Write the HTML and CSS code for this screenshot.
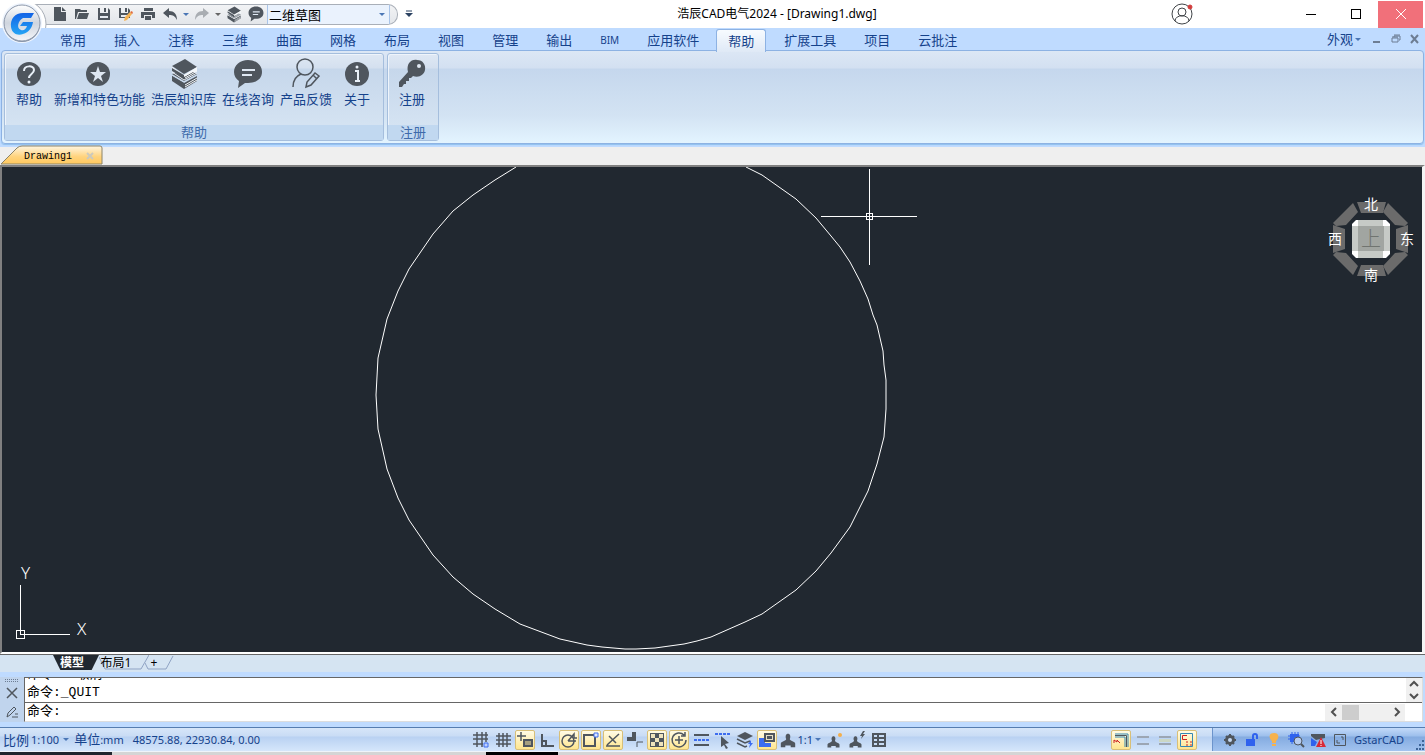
FILE: index.html
```html
<!DOCTYPE html>
<html lang="zh-CN">
<head>
    <meta charset="utf-8">
    <title>浩辰CAD电气2024 - [Drawing1.dwg]</title>
    <link rel="stylesheet" href="styles.css">
</head>
<body>
<svg class="defs" aria-hidden="true">
    <symbol id="i-layers" viewBox="0 0 28 32">
        <path d="M15 1l12 8-13 7L2 8z" fill="#4f565e"/>
        <path d="M2 9v4l12 7 13-7V9l-13 8z" fill="#f4f7fa"/>
        <path d="M2 10l12 7v3L2 13zM2 18l12 7v3L2 21zM2 25z" fill="#4f565e"/>
        <path d="M2 16l12 7 13-7-4-2-9 5-8-4zM2 18v5l12 8 13-8v-5l-13 7z" fill="#4f565e"/>
        <path d="M15 18l12-7M15 20l12-7M15 27l12-7M15 29l12-7" stroke="#f4f7fa" stroke-width="1"/>
        <path d="M2 14l12 8 13-7" stroke="#eaf0f7" fill="none"/>
    </symbol>
    <symbol id="i-comment" viewBox="0 0 30 30">
        <path d="M15 1c8 0 14 5 14 12s-6 11-14 11l-3 0-7 5 1-7c-3-2-5-5-5-9C1 6 7 1 15 1z" fill="#4f565e"/>
        <path d="M9 11h13M9 16h10" stroke="#dfe8f3" stroke-width="2"/>
    </symbol>
    <symbol id="i-person" viewBox="0 0 20 20">
        <path d="M8 9C5 1 15 1 12 9c0 2 6 3 6 5v4h-5v-2H7v2H2v-4c0-2 6-3 6-5z" fill="#4f565e"/>
    </symbol>
</svg>

<header class="titlebar">
    <div class="quick">
        <button aria-label="新建"><svg width="16" height="16"><path d="M2 1h7v5h5v9H2z" fill="#4f565e"/><path d="M10 1l4 4h-4z" fill="#4f565e"/></svg></button>
        <button aria-label="打开"><svg width="16" height="16"><path d="M1 13V3h5l1 1h6v2H4L2 13z" fill="#4f565e"/><path d="M5 7h10l-2 6H3z" fill="#4f565e"/></svg></button>
        <button aria-label="保存"><svg width="16" height="16"><path d="M2 2h2v5h8V2l2 2v10H2z" fill="#4f565e"/><path d="M8 2h2v4H8z" fill="#4f565e"/><path d="M4 10h8v2H4z" fill="#e6eaf0"/></svg></button>
        <button aria-label="另存为"><svg width="16" height="16"><path d="M1 2h2v5h7V2l2 2v8H1z" fill="#4f565e"/><path d="M7 2h2v4H7zM4 10h5v2H4z" fill="#4f565e"/><path d="M3 9h6v2H3z" fill="#e6eaf0"/><path d="M6 15l1-4 5-5 2 2-5 6z" fill="#f5b253"/><path d="M12 6l2-1 1 2-1 1z" fill="#e26b3c"/></svg></button>
        <button aria-label="打印"><svg width="16" height="16"><path d="M4 2h9v3H4zM1 6h14v6h-3V9H4v3H1zM5 10h6v4H5z" fill="#4f565e"/></svg></button>
        <button aria-label="放弃"><svg width="16" height="16"><path d="M1 7l6-5v3c5 0 8 3 8 9-2-4-4-5-8-5v3z" fill="#4f565e"/></svg></button>
        <i class="caret blue"></i>
        <button aria-label="重做"><svg width="16" height="16"><path d="M15 7L9 2v3C4 5 1 8 1 14c2-4 4-5 8-5v3z" fill="#a9adb2"/></svg></button>
        <i class="caret"></i>
        <button aria-label="知识库"><svg width="16" height="17"><use href="#i-layers"/></svg></button>
        <button aria-label="咨询"><svg width="16" height="16"><use href="#i-comment"/></svg></button>
        <label class="space"><select aria-label="工作空间"><option>二维草图</option></select><i class="caret blue"></i></label>
    </div>
    <button class="more" aria-label="自定义"><svg width="8" height="8"><path d="M1 1h6" stroke="#2b4262"/><path d="M0 3h8L4 7z" fill="#2b4262"/></svg></button>
    <h1>浩辰CAD电气2024 - [Drawing1.dwg]</h1>
    <button class="user" aria-label="用户">
        <svg width="24" height="24" fill="none" stroke="#3f4347">
            <circle cx="12" cy="12" r="10"/><circle cx="12" cy="10" r="4"/><path d="M5 19c0-7 14-7 14 0"/>
            <circle cx="20" cy="5" r="2" fill="#d23c3c" stroke="#d23c3c"/>
        </svg>
    </button>
    <div class="window">
        <button aria-label="最小化"><svg width="12" height="12"><path d="M1 6h10" transform="translate(0 .5)" stroke="#000"/></svg></button>
        <button aria-label="最大化"><svg width="12" height="12"><rect x="1.500" y="1.500" width="9" height="9" fill="none" stroke="#000"/></svg></button>
        <button class="close" aria-label="关闭"><svg width="12" height="12"><path d="M1 1l10 10M11 1L1 11" stroke="#fff"/></svg></button>
    </div>
</header>
<button class="logo" aria-label="主菜单">
    <svg width="50" height="46">
        <defs>
            <linearGradient id="silver" x2="0" y2="1"><stop stop-color="#fff"/><stop offset=".5" stop-color="#cfd5de"/><stop offset="1" stop-color="#f4f6f9"/></linearGradient>
            <linearGradient id="gblue" x2="0" y2="1"><stop stop-color="#1263e6"/><stop offset="1" stop-color="#25a5f5"/></linearGradient>
            <clipPath id="top"><path d="M24 4h26v24H24z"/></clipPath>
        </defs>
        <circle cx="22" cy="24" r="24" fill="#fff" stroke="#a9afb8" clip-path="url(#top)"/>
        <circle cx="22" cy="23" r="20" fill="#eef4fd"/>
        <circle cx="22" cy="24" r="18" fill="#8593a8"/>
        <circle cx="22" cy="23" r="18" fill="url(#silver)" stroke="#8d98aa"/>
        <path d="M34 13H23C15 13 10 19 11 27c1 7 7 9 12 7 6-2 9-6 10-12H23l-3 4h7c-1 3-3 5-6 4-5-2-3-9 2-12h8z" fill="url(#gblue)"/>
    </svg>
</button>

<nav class="menu">
    <a href="#">常用</a><a href="#">插入</a><a href="#">注释</a><a href="#">三维</a><a href="#">曲面</a><a href="#">网格</a><a href="#">布局</a><a href="#">视图</a><a href="#">管理</a><a href="#">输出</a><a href="#" class="latin">BIM</a><a href="#">应用软件</a><a href="#" class="on">帮助</a><a href="#">扩展工具</a><a href="#">项目</a><a href="#">云批注</a>
    <div class="menu-right">
        <button>外观<i class="caret blue"></i></button>
        <button aria-label="最小化文档"><svg width="10" height="10"><path d="M1 8h7" stroke="#6d7d93" stroke-width="2"/></svg></button>
        <button aria-label="还原文档"><svg width="10" height="10" fill="none" stroke="#6d7d93"><path d="M1 4h6v4H1zM3 3V2h6v4H8M1 3h6M3 1h6"/></svg></button>
        <button aria-label="关闭文档"><svg width="10" height="10"><path d="M1 1l7 8M8 1L1 9" stroke="#6d7d93" stroke-width="2"/></svg></button>
    </div>
</nav>

<section class="ribbon">
    <div class="panel">
        <div class="tools">
            <button><svg width="28" height="32"><circle cx="14" cy="16" r="12" fill="#4f565e"/><path d="M9 13c0-6 10-6 10-1 0 4-5 4-5 8" fill="none" stroke="#e9f0f8" stroke-width="2"/><circle cx="14" cy="24" r="1.500" fill="#e9f0f8"/></svg>帮助</button>
            <button class="wide"><svg width="28" height="32"><circle cx="14" cy="16" r="12" fill="#4f565e"/><path d="M14 8l2 6h6l-5 4 2 6-5-4-5 4 2-6-5-4h6z" fill="#dfe8f3"/></svg>新增和特色功能</button>
            <button><svg width="28" height="32"><use href="#i-layers"/></svg>浩辰知识库</button>
            <button><svg width="30" height="32"><use href="#i-comment" y="1" width="30" height="30"/></svg>在线咨询</button>
            <button><svg width="32" height="32" fill="none" stroke="#4f565e" stroke-width="1.500"><circle cx="15" cy="9" r="8"/><path d="M3 29c0-6 3-11 8-13M16 29l1-5 8-9 4 3-8 9zM23 17l4 4"/></svg>产品反馈</button>
            <button><svg width="28" height="32"><circle cx="14" cy="16" r="12" fill="#4f565e"/><path d="M12 13h3v9m-3 1h5" stroke="#e9f0f8" stroke-width="2" fill="none"/><circle cx="14" cy="9" r="1.500" fill="#e9f0f8"/></svg>关于</button>
        </div>
        <h2>帮助</h2>
    </div>
    <div class="panel">
        <div class="tools">
            <button><svg width="28" height="32"><path d="M10 14C8 6 13 1 19 2c6 0 9 5 8 10-1 5-6 8-12 6l-2 2h-2v3H8v3H6l-2 3H1v-5z" fill="#4f565e"/><circle cx="21" cy="8" r="2" fill="#dfe8f3"/></svg>注册</button>
        </div>
        <h2>注册</h2>
    </div>
</section>

<div class="files">
    <div class="file">
        <svg class="shape" width="104" height="20">
            <defs><linearGradient id="amber" x2="0" y2="1"><stop stop-color="#fff6e2"/><stop offset=".6" stop-color="#ffd37c"/><stop offset="1" stop-color="#ffc95f"/></linearGradient></defs>
            <path d="M1 19L17 3q2-2 5-2h78q2 0 2 2v16z" fill="url(#amber)" stroke="#8c8468"/>
        </svg>
        <span>Drawing1</span>
        <button aria-label="关闭图纸"><svg width="8" height="8"><path d="M1 1l6 6M7 1L1 7" stroke="#cbc9bd" stroke-width="2"/></svg></button>
    </div>
</div>

<main class="stage">
    <svg class="drawing" width="100%" height="100%">
        <g transform="translate(-2 -167)" fill="none" stroke="#fff">
            <path d="M746 167L762 175 796 199 816 218 831 236 840 247 850 262 860 281 868 299 873 315 877 325 883 351 884 365 886 380V409L884 437 877 464 872 479 868 491 850 527 831 553 816 571 796 590 762 614 745 622 711 637 697 641 684 644 655 648 636 649H625L602 647 587 645 560 639 520 624 495 609 473 594 453 577 433 555 409 520 398 498 387 469 378 429 376 395 378 358 387 319 398 291 409 269 433 234 453 211 473 195 495 180 516 167"/>
            <g shape-rendering="crispEdges">
                <path d="M821 216.500h96M869.500 169v96"/>
                <rect x="866.500" y="213.500" width="6" height="6"/>
            </g>
        </g>
    </svg>
    <svg class="compass" width="90" height="94">
        <g fill="#6b6b6b">
            <path d="M31 10h29l-3 11H35zM31 84h29l-3-11H35z"/>
            <path d="M82 33v28l-12-4V37zM7 33v28l12-4V37z"/>
            <path d="M62 11l20 20-3 3-10-1-12-13zM27 11L7 31l3 3 10-1 12-13zM62 83l20-20-3-3-10 1-12 13zM27 83L7 63l3-3 10 1 12 13z"/>
        </g>
        <path d="M30 28h30l4 4v30l-4 4H30l-4-4V32z" fill="#fff"/>
        <path d="M32 28h25v6h7v25h-7v7H32v-7h-6V34h6z" fill="#c6cac6"/>
        <path d="M32 34h26v25H32z" fill="#a1a5a1"/>
        <g fill="#fff" text-anchor="middle">
            <text x="45" y="17">北</text><text x="9" y="52">西</text><text x="81" y="52">东</text><text x="45" y="88">南</text>
            <text class="up" x="45" y="54">上</text>
        </g>
    </svg>
    <svg class="ucs" width="80" height="82" fill="none" stroke="#fff" shape-rendering="crispEdges">
        <path d="M8.500 27v50M8 76.500h50"/><rect x="4.500" y="72.500" width="8" height="8"/>
        <text x="9" y="21">Y</text><text x="65" y="77">X</text>
    </svg>
</main>

<div class="layouts">
    <button class="on">模型</button>
    <button class="second"><svg class="shape" width="50" height="18"><path d="M0 2l6 12h36l8-14" fill="none" stroke="#8fa3c4"/></svg>布局1</button>
    <button class="plus"><svg class="shape" width="30" height="18"><path d="M0 8l3 6h18l7-13" fill="none" stroke="#8fa3c4"/></svg>+</button>
</div>

<section class="command">
    <div class="side">
        <svg width="14" height="5"><path d="M0 1.500h14M0 3.500h14" stroke="#6d7d93" stroke-dasharray="1 1"/></svg>
        <button aria-label="关闭命令行"><svg width="14" height="14"><path d="M2 2l10 10M12 2L2 12" stroke="#4f565e" stroke-width="1.500"/></svg></button>
        <button aria-label="设置"><svg width="14" height="14" fill="none" stroke="#4f565e"><path d="M2 12l1-4 6-6 2 2-6 6zM7 12h6M10 9h3"/></svg></button>
    </div>
    <div class="console">
        <div class="history">
            <div class="lines"><p>命令: *取消*</p><p>命令:_QUIT</p></div>
            <div class="vscroll"><button aria-label="向上"><svg width="10" height="8"><path d="M1 6l4-4 4 4" fill="none" stroke="#505050" stroke-width="2"/></svg></button><button aria-label="向下"><svg width="10" height="8"><path d="M1 2l4 4 4-4" fill="none" stroke="#505050" stroke-width="2"/></svg></button></div>
        </div>
        <div class="prompt">
            <label for="cmd">命令:</label><input id="cmd" type="text">
            <div class="hscroll"><button aria-label="向左"><svg width="8" height="10"><path d="M6 1L2 5l4 4" fill="none" stroke="#505050" stroke-width="2"/></svg></button><i></i><button aria-label="向右"><svg width="8" height="10"><path d="M2 1l4 4-4 4" fill="none" stroke="#505050" stroke-width="2"/></svg></button></div>
        </div>
    </div>
</section>

<footer class="status">
    <div class="info">
        <button>比例 <small>1:100</small><i class="caret blue"></i></button>
        <span>单位<small>:mm</small></span>
        <small class="coords">48575.88, 22930.84, 0.00</small>
    </div>
    <div class="modes">
        <button aria-label="捕捉"><svg width="18" height="18"><path d="M5 1v15M10 1v15M14 1v10M1 4h15M1 8h15M1 13h10" stroke="#4f565e" stroke-width="1.500"/><path d="M12 12h4v4h-4z" fill="#bcd0ff" stroke="#3d6df0"/></svg></button>
        <button aria-label="栅格"><svg width="18" height="18"><path d="M5 2v14M9 2v14M13 2v14M2 5h15M2 9h15M2 13h15" stroke="#4f565e" stroke-width="1.500"/></svg></button>
        <button class="on" aria-label="动态输入"><svg width="18" height="18"><path d="M5 1v9M1 5h9" stroke="#4f565e" stroke-width="1.500"/><path d="M7 8h10v8H7z" fill="#4f565e"/><path d="M9 11h6M9 13h6" stroke="#ffe9a0"/></svg></button>
        <button aria-label="正交"><svg width="18" height="18"><path d="M4 3v12h12M4 10h4v5" fill="none" stroke="#4f565e" stroke-width="2"/></svg></button>
        <button class="on" aria-label="极轴"><svg width="18" height="18" fill="none" stroke="#4f565e" stroke-width="1.500"><circle cx="8" cy="10" r="6"/><path d="M8 10h8M8 10l6-7v4h3"/></svg></button>
        <button class="on" aria-label="对象捕捉"><svg width="18" height="18" fill="none"><path d="M2 4h11v11H2z" stroke="#4f565e" stroke-width="2"/><path d="M12 2h4v4h-4z" fill="#dbe6ff" stroke="#3d6df0"/></svg></button>
        <button class="on" aria-label="对象追踪"><svg width="18" height="18" fill="none" stroke="#4f565e" stroke-width="1.500"><path d="M2 15h14M3 14L15 3M5 5l7 7"/></svg></button>
        <button aria-label="线框"><svg width="18" height="18"><path d="M6 1h4v9H1V6h5z" fill="#4f565e"/><path d="M11 16v-5h6" fill="none" stroke="#4f565e"/></svg></button>
        <button class="on" aria-label="透明度"><svg width="18" height="18"><path d="M2 2h14v14H2z" fill="#4f565e"/><path d="M3 3h4v4H3zM11 3h4v4h-4zM7 7h4v4H7zM3 11h4v4H3zM11 11h4v4h-4z" fill="#eee3bd"/></svg></button>
        <button class="on" aria-label="循环选择"><svg width="18" height="18" fill="none" stroke="#4f565e" stroke-width="1.500"><path d="M14 4a7 7 0 1 0 2 5M15 1v4h-4M5 9h8M9 5v8"/></svg></button>
        <button aria-label="线宽"><svg width="18" height="18"><path d="M2 4h15M2 14h15" stroke="#4f565e" stroke-width="2"/><path d="M2 9h15" stroke="#3d6df0" stroke-width="2" stroke-dasharray="3 1"/></svg></button>
        <button aria-label="选择"><svg width="18" height="18"><path d="M1 3h15" stroke="#3d6df0" stroke-width="2" stroke-dasharray="3 1"/><path d="M7 5l8 7-4 1 3 4-2 1-2-4-3 2z" fill="#4f565e"/></svg></button>
        <button aria-label="图层"><svg width="18" height="18"><path d="M9 1l8 4-8 4-8-4z" fill="#4f565e"/><path d="M1 8l8 4 5-2M1 12l8 4 2-1" fill="none" stroke="#4f565e" stroke-width="1.500"/><path d="M15 9l-3 4h2l-1 4 4-5h-2z" fill="#3d6df0"/></svg></button>
        <button class="on" aria-label="窗口"><svg width="18" height="18"><path d="M1 7h6v5h6v4H1z" fill="#3d6df0"/><path d="M7 3h9v7H7z" fill="#e5dfc5" stroke="#4f565e" stroke-width="2"/><path d="M9 5h5v3H9z" fill="#4f565e"/></svg></button>
        <button class="scale" aria-label="注释比例"><svg width="18" height="18"><use href="#i-person"/></svg><small>1:1</small><i class="caret blue"></i></button>
        <button aria-label="注释可见性"><svg width="18" height="18"><use href="#i-person" y="3" width="15" height="15"/><circle cx="14" cy="4" r="2" fill="#f4ae4a"/></svg></button>
        <button aria-label="自动缩放"><svg width="18" height="18"><use href="#i-person" y="3" width="15" height="15"/><path d="M15 0l-3 5h2l-1 3 4-5h-2l2-3z" fill="#4f565e"/></svg></button>
        <button aria-label="表格"><svg width="18" height="18"><path d="M2 2h14v14H2z" fill="#4f565e"/><path d="M4 4h3v2H4zM9 4h5v2H9zM4 8h3v2H4zM9 8h5v2H9zM4 12h3v2H4zM9 12h5v2H9z" fill="#c8dcf5"/></svg></button>
    </div>
    <div class="modes extra">
        <button class="on" aria-label="电气"><svg width="18" height="18" fill="none"><path d="M3 3h13v13M3 6h10v10" stroke="#3488b4"/><path d="M3 4.500h11.500V16" stroke="#4f565e"/><path d="M2 12V9l3 2V9l3 3" stroke="#c22"/></svg></button>
        <button aria-label="单线"><svg width="18" height="18"><path d="M3 6h12M3 13h12" stroke="#9ca6b3" stroke-width="2"/></svg></button>
        <button aria-label="填充线"><svg width="18" height="18"><path d="M3 6h12M3 13h12" stroke="#9ca6b3" stroke-width="2"/><path d="M3 9.500h12" stroke="#cbd7c5" stroke-width="3"/></svg></button>
        <button class="on" aria-label="节点"><svg width="18" height="18" fill="none"><path d="M2.500 2.500h12v13h-12z" stroke="#3488b4"/><path d="M9 4.500H4.500v4H9" stroke="#c22"/><path d="M8 11h2M12 11h2M8 14h2M12 14h2" stroke="#c22"/></svg></button>
    </div>
    <div class="modes tray">
        <button aria-label="设置"><svg width="18" height="18"><circle cx="9" cy="9" r="5" fill="#4f565e"/><path d="M9 3v12M3 9h12M5 5l8 8M13 5l-8 8" stroke="#4f565e" stroke-width="2"/><circle cx="9" cy="9" r="2" fill="#c4d8f4"/></svg></button>
        <button aria-label="锁定"><svg width="18" height="18"><path d="M3 8h9v7H3z" fill="#2f62ee"/><path d="M10 8V5q0-2 2-2t2 2v3" fill="none" stroke="#2f62ee" stroke-width="2"/></svg></button>
        <button aria-label="隔离"><svg width="18" height="18"><path d="M9 2c6 0 5 6 2 8v2H7v-2C4 8 3 2 9 2zM7 13h4v2H7z" fill="#f6b24d"/></svg></button>
        <button aria-label="硬件加速"><svg width="18" height="18"><path d="M3 3h9v8H3z" fill="#2f62ee"/><path d="M1 5h12M1 8h12M5 1v12M8 1v12M11 1v5" stroke="#2f62ee"/><circle cx="11" cy="10" r="4" fill="#b7cdf0" stroke="#4f565e"/><path d="M14 13l3 3" stroke="#4f565e" stroke-width="2"/></svg></button>
        <button aria-label="通知"><svg width="18" height="18"><path d="M2 3h14v4l-5 1-4 1-5-4z" fill="#4f565e"/><path d="M2 7l6 4-2 4H2z" fill="#2f62ee"/><path d="M12 6l5 10H7z" fill="#d82a37"/><path d="M12 9v4M12 14v1" stroke="#fff"/></svg></button>
        <button aria-label="全屏"><svg width="18" height="18" fill="none" stroke="#4f565e"><path d="M3.500 3.500h11v11h-11zM10 6h2v3M6 9v3h3"/></svg></button>
        <span>GstarCAD</span>
        <svg class="corner" width="10" height="12" fill="#3e6598"><path d="M7 1h2v2H7zM4 5h2v2H4zM7 5h2v2H7zM1 9h2v2H1zM4 9h2v2H4zM7 9h2v2H7z"/></svg>
    </div>
</footer>
<div class="under"><i class="dark"></i><i class="black"></i></div>
</body>
</html>
```
FILE: styles.css
```css
*{margin:0;padding:0;box-sizing:border-box;}
body{height:100vh;display:flex;flex-direction:column;overflow:hidden;position:relative;background:#bfdbff;color:#15428b;font:13px/18px "Noto Sans","Noto Sans CJK SC",sans-serif;}
button{border:0;background:none;color:inherit;font:inherit;display:flex;align-items:center;justify-content:center;white-space:nowrap;}
a{color:inherit;text-decoration:none;}
svg{display:block;flex:none;}
small{font-size:11px;}
.defs{position:absolute;width:0;height:0;}
.caret{flex:none;width:0;height:0;border:3px solid transparent;border-top:3px solid #666;border-bottom:0;margin:0 2px;}
.caret.blue{border-top-color:#4a76b5;}
.shape{position:absolute;left:0;top:0;z-index:-1;}

/* 标题栏 */
.titlebar{flex:none;height:28px;background:#fff;display:flex;align-items:center;position:relative;}
.quick{height:21px;margin-left:30px;padding-left:19px;display:flex;align-items:center;background:linear-gradient(#f2f3f5,#e3e6ea);border:1px solid #a9afb8;border-left:0;border-radius:0 10px 10px 0;}
.quick button{width:22px;height:19px;}
.quick>.caret{margin:0 2px;}
.space{display:flex;align-items:center;width:123px;height:19px;margin-right:7px;background:#eaf2fd;border:1px solid #a9c4e8;border-width:0 1px;}
.space select{flex:1;min-width:0;height:19px;border:0;background:none;appearance:none;color:#000;font:13px "Noto Sans CJK SC",sans-serif;padding-left:1px;}
.space .caret{margin-right:4px;}
.more{width:22px;height:20px;}
.titlebar h1{flex:1;text-align:center;color:#000;font-size:12px;font-weight:normal;padding-right:36px;}
.user{margin-right:94px;}
.window{display:flex;height:27px;margin-right:2px;}
.window button{width:45px;}
.window .close{background:#f1707a;}
.logo{position:absolute;left:0;top:0;z-index:3;}

/* 菜单 */
.menu{flex:none;height:22px;display:flex;padding-left:46px;position:relative;z-index:1;line-height:24px;}
.menu a{padding:0 14px;height:24px;}
.menu .latin{font-size:10px;}
.menu .on{margin:1px 2px 0 3px;padding:0 11px;height:23px;line-height:22px;border:1px solid #8db2e3;border-bottom:0;border-radius:3px 3px 0 0;background:linear-gradient(#f7fbff,#dfe9f6);}
.menu .on+a{padding-left:16px;}
.menu-right{margin-left:auto;display:flex;align-items:center;padding-right:5px;gap:9px;}

/* 功能区 */
.ribbon{flex:none;height:94px;margin:0 1px 3px;padding:2px;display:flex;gap:3px;border:1px solid #8db2e3;border-radius:4px;background:linear-gradient(#dce7f5,#d3e0f1 17px,#c5d7ed 18px,#d3e3f3 70%,#e3f4ff);box-shadow:0 1px 1px #8fc0ee;}
.panel{display:flex;flex-direction:column;border:1px solid #a5bedd;border-radius:3px;background:linear-gradient(#dfe8f4,#d4e0ef 14px,#c6d7eb 15px,#d8e6f4);box-shadow:inset 1px 1px 0 #eef4fb;}
.tools{flex:1;display:flex;padding:4px 4px 0 2px;}
.tools button{flex-direction:column;justify-content:flex-start;min-width:44px;padding:0 3px;}
.tools .wide svg{margin-right:4px;}
.panel h2{height:15px;line-height:15px;text-align:center;font-size:13px;font-weight:normal;color:#3e6aaa;background:#c1d8f0;}

/* 图纸标签 */
.files{flex:none;height:18px;background:#efefef;}
.file{position:relative;z-index:1;display:flex;align-items:center;justify-content:space-between;width:104px;height:18px;padding:0 10px 0 24px;color:#000;font:10px "Liberation Mono",monospace;}
.file .shape{top:-2px;}

/* 绘图区 */
.stage{flex:1;min-height:0;position:relative;background:#212830;border:2px solid #808080;border-right:3px solid #f4f4f4;border-bottom-color:#fff;overflow:hidden;}
.compass{position:absolute;right:6px;top:25px;font:14px "Noto Sans CJK SC",sans-serif;}
.compass .up{font-size:20px;font-weight:300;fill:#707470;}
.ucs{position:absolute;left:10px;bottom:12px;}
.ucs text{font:300 17px "Noto Sans",sans-serif;fill:#fff;stroke:none;}

/* 布局标签 */
.layouts{flex:none;height:18px;margin-bottom:5px;padding-left:53px;display:flex;background:#d5e4f2;border-top:1px solid #666;color:#000;font-size:12px;line-height:14px;position:relative;z-index:0;}
.layouts button{position:relative;height:15px;}
.layouts .on{width:46px;padding-right:8px;background:#212830;color:#fff;font-weight:bold;clip-path:polygon(0 0,100% 0,84% 100%,16% 100%);}
.layouts .second{width:46px;padding-right:12px;}
.layouts .plus{width:28px;padding-right:10px;}

/* 命令行 */
.command{flex:none;height:45px;margin:0 2px 5px 0;display:flex;}
.side{width:24px;display:flex;flex-direction:column;align-items:center;background:#c0d4ed;padding-top:1px;}
.side button{height:21px;width:22px;}
.console{flex:1;display:flex;flex-direction:column;background:#fff;border:1px solid #666;border-right-color:#ddd;border-bottom-color:#ddd;color:#000;font:13px/18px "Liberation Mono","Noto Sans CJK SC",monospace;}
.history{height:25px;display:flex;border-bottom:1px solid #666;}
.lines{flex:1;display:flex;flex-direction:column;justify-content:flex-end;overflow:hidden;padding-left:2px;}
.lines p{flex:none;height:18px;}
.vscroll{width:16px;display:flex;flex-direction:column;background:#f0f0f0;}
.vscroll button{flex:1;}
.prompt{flex:1;display:flex;align-items:center;padding-left:2px;}
.prompt input{flex:1;min-width:0;border:0;outline:0;font:inherit;}
.hscroll{display:flex;align-items:center;width:80px;height:17px;margin-right:17px;background:#f0f0f0;}
.hscroll button{width:17px;height:17px;}
.hscroll i{width:17px;height:15px;margin-right:auto;background:#cdcdcd;}

/* 状态栏 */
.status{flex:none;height:24px;display:flex;border-top:1px solid #567db0;background:linear-gradient(#d7e6f9,#c9dcf5 8px,#b9d1f2 9px,#d5e6fb);}
.info{width:33%;display:flex;align-items:center;padding-left:3px;}
.info button{gap:2px;}
.info span{margin-left:3px;}
.coords{margin-left:9px;}
.modes{display:flex;align-items:center;}
.modes button{width:20px;height:20px;margin:0 1px;border:1px solid transparent;border-radius:2px;}
.modes .on{border-color:#d8bf78;background:linear-gradient(#fffbe6,#ffe68f);}
.modes .scale{width:44px;}
.extra{margin-left:auto;}
.tray{margin-left:14px;padding-left:6px;border-left:1px solid #6c94cc;background:linear-gradient(#c3daf9,#9dbfec 8px,#84abe0 9px,#a2c3ef);}
.tray span{margin-left:3px;font-size:11px;}
.corner{align-self:flex-end;margin-left:11px;}
.under{flex:none;height:4px;display:flex;gap:374px;background:#d5d5d5;border-top:1px solid #f0f4fa;}
.under .dark{width:112px;background:#20262e;}
.under .black{width:72px;background:#000;}
```
